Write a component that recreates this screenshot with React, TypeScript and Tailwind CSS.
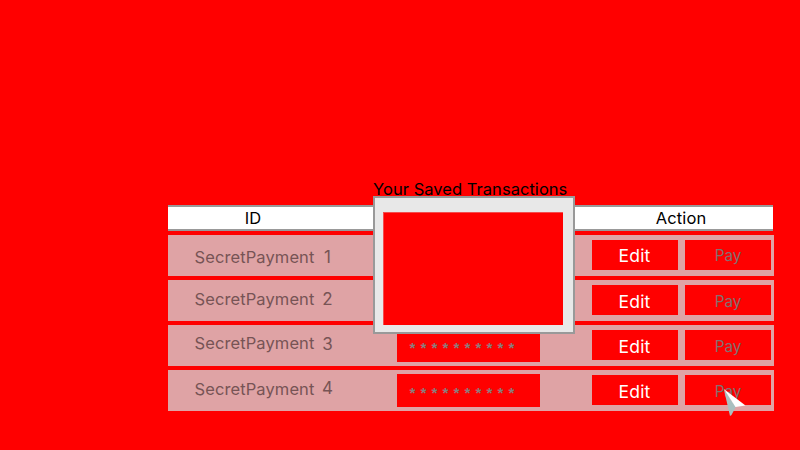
type Row = { id: string; idPad: string; numPad: string; editPad: string; payPad: string };

const rows: Row[] = [
  { id: '1', idPad: 'pt-[12px]', numPad: 'pt-[12px]', editPad: 'pt-[6px]', payPad: 'pt-[6px]' },
  { id: '2', idPad: 'pt-[9px]', numPad: 'pt-[9px]', editPad: 'pt-[7px]', payPad: 'pt-[7px]' },
  { id: '3', idPad: 'pt-[8px]', numPad: 'pt-[9px]', editPad: 'pt-[7px]', payPad: 'pt-[7px]' },
  { id: '4', idPad: 'pt-[9px]', numPad: 'pt-[8px]', editPad: 'pt-[7px]', payPad: 'pt-[7px]' },
];

function TransactionRow({ row }: { row: Row }) {
  return (
    <div className="flex h-[41px] bg-[#dfa3a5] text-[16.5px] leading-5 text-[#775455]">
      <div className="flex w-[229px] pl-[26.500px]">
        <span className={`w-[126.5px] tracking-[0.1px] ${row.idPad}`}>SecretPayment</span>
        <span className={`w-[13px] text-center text-[17px] ${row.numPad}`}>{row.id}</span>
      </div>
      <div className="mt-[4px] h-[33px] w-[143px] bg-[#ff0000] pl-[11px] pt-[14px] font-['Liberation_Mono',monospace] text-[15px] font-bold leading-4 tracking-[2px] text-[#8c7c7c]">
        **********
      </div>
      <div className="ml-[52px] mt-[5px] flex gap-[7px]">
        <button className={`flex h-[30px] w-[86px] items-start justify-center bg-[#ff0000] pr-[1px] text-[17.5px] leading-5 tracking-[0.2px] text-white ${row.editPad}`}>Edit</button>
        <button className={`flex h-[30px] w-[86px] items-start justify-center bg-[#ff0000] text-[15.3px] leading-5 text-[#827070] ${row.payPad}`}>Pay</button>
      </div>
    </div>
  );
}

export default function App() {
  return (
    <main className="relative h-[450px] w-[800px] overflow-hidden bg-[#ff0000] pl-[168px] pt-[179px] font-['Inter',sans-serif] whitespace-nowrap">
      <h1 className="h-[26px] pl-[205px] text-[16.5px] leading-5 tracking-[0.04px] text-black">Your Saved Transactions</h1>
      <div className="flex h-[26px] w-[605px] border-y-2 border-[#999999] bg-white text-[16.5px] leading-[22px] tracking-[0.15px] text-black">
        <span className="w-[170px] text-center">ID</span>
        <span className="ml-[256px] w-[174px] text-center">Action</span>
      </div>
      <div className="mt-[4px] flex w-[606px] flex-col gap-[4px]">
        {rows.map((row) => (
          <TransactionRow key={row.id} row={row} />
        ))}
      </div>
      <div className="absolute left-[373px] top-[196px] h-[138px] w-[202px] border-2 border-[#999999] bg-[#e8e8e8] pl-[8px] pt-[14px]">
        <div className="h-[113px] w-[180px] border-l border-t border-[#f34d4d] bg-[#ff0000]" />
      </div>
      <svg className="absolute left-[722px] top-[388px]" width="26" height="30" viewBox="0 0 26 30">
        <path d="M1.800 1L8 28L9.500 27L14 18.500Z" fill="#a9bfbf" />
        <path d="M1.800 1L13.500 19L23.500 17.500Z" fill="#ffffff" />
      </svg>
    </main>
  );
}
